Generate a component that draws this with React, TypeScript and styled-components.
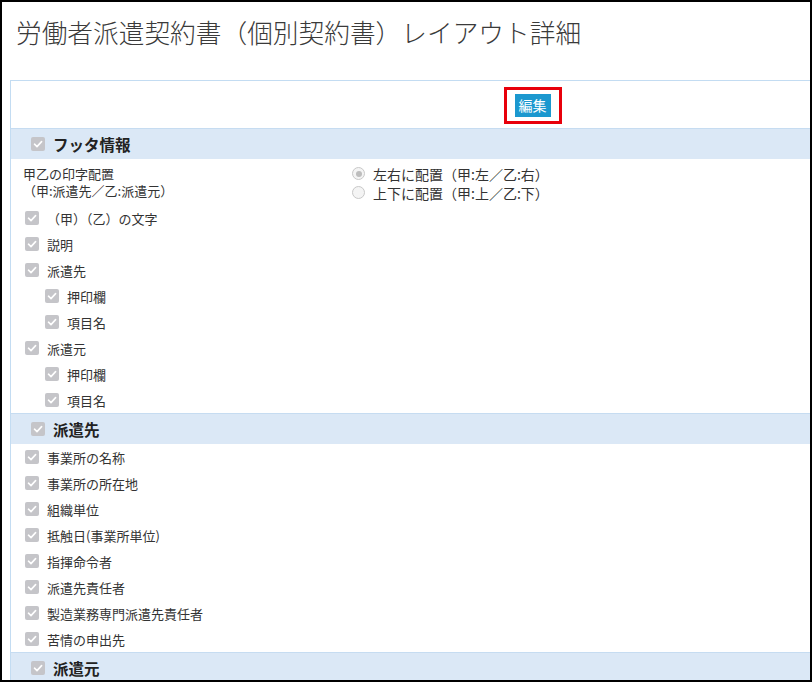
import React from 'react';
import styled, { createGlobalStyle } from 'styled-components';

const GlobalStyle = createGlobalStyle`
  html, body {
    margin: 0;
    padding: 0;
    background: #fff;
  }
  body {
    font-family: "Noto Sans CJK JP", "Noto Sans", sans-serif;
    color: #333;
  }
`;

type Item = { label: string; indent?: boolean };

const footerItems: Item[] = [
  { label: '（甲）（乙）の文字' },
  { label: '説明' },
  { label: '派遣先' },
  { label: '押印欄', indent: true },
  { label: '項目名', indent: true },
  { label: '派遣元' },
  { label: '押印欄', indent: true },
  { label: '項目名', indent: true },
];

const clientItems: Item[] = [
  { label: '事業所の名称' },
  { label: '事業所の所在地' },
  { label: '組織単位' },
  { label: '抵触日(事業所単位)' },
  { label: '指揮命令者' },
  { label: '派遣先責任者' },
  { label: '製造業務専門派遣先責任者' },
  { label: '苦情の申出先' },
];

const CheckMark: React.FC<{ size?: number }> = ({ size = 14 }) => (
  <CheckBox $size={size}>
    <svg width={size} height={size} viewBox="0 0 14 14">
      <path d="M3.5 7.2 L6 9.6 L10.6 4.6" fill="none" stroke="#fff" strokeWidth="1.6" strokeLinecap="round" strokeLinejoin="round" />
    </svg>
  </CheckBox>
);

const App: React.FC = () => {
  return (
    <>
      <GlobalStyle />
      <Frame>
        <Title>労働者派遣契約書（個別契約書）レイアウト詳細</Title>
        <Panel>
          <Toolbar>
            <Highlight>
              <EditButton>編集</EditButton>
            </Highlight>
          </Toolbar>

          <SectionHeader>
            <CheckMark />
            <SectionTitle>フッタ情報</SectionTitle>
          </SectionHeader>
          <SettingRow>
            <SettingLabel>
              甲乙の印字配置
              <br />
              （甲:派遣先／乙:派遣元）
            </SettingLabel>
            <RadioList>
              <RadioItem>
                <Radio $checked />
                左右に配置（甲:左／乙:右）
              </RadioItem>
              <RadioItem>
                <Radio />
                上下に配置（甲:上／乙:下）
              </RadioItem>
            </RadioList>
          </SettingRow>
          {footerItems.map((it, i) => (
            <CheckRow key={'f' + i} $indent={it.indent}>
              <CheckMark />
              <span>{it.label}</span>
            </CheckRow>
          ))}

          <SectionHeader>
            <CheckMark />
            <SectionTitle>派遣先</SectionTitle>
          </SectionHeader>
          {clientItems.map((it, i) => (
            <CheckRow key={'c' + i} $indent={it.indent}>
              <CheckMark />
              <span>{it.label}</span>
            </CheckRow>
          ))}

          <SectionHeader>
            <CheckMark />
            <SectionTitle>派遣元</SectionTitle>
          </SectionHeader>
        </Panel>
      </Frame>
    </>
  );
};

const Frame = styled.div`
  width: 812px;
  height: 682px;
  box-sizing: border-box;
  border: 2px solid #000;
  overflow: hidden;
  background: #fff;
`;

const Title = styled.h1`
  margin: 0;
  padding: 12px 14px 0;
  font-size: 25.7px;
  line-height: 36px;
  font-weight: 300;
  color: #3a3a3a;
  white-space: nowrap;
`;

const Panel = styled.div`
  margin: 30px 0 0 8px;
  width: 1044px;
  box-sizing: border-box;
  border-top: 1px solid #c3dcf2;
  border-left: 1px solid #c3dcf2;
`;

const Toolbar = styled.div`
  height: 47px;
  display: flex;
  align-items: center;
  justify-content: center;
`;

const Highlight = styled.div`
  display: flex;
  align-items: center;
  justify-content: center;
  width: 58px;
  height: 37px;
  box-sizing: border-box;
  border: 3px solid #e8000b;
  margin-top: 1px;
`;

const EditButton = styled.button`
  width: 36px;
  height: 23px;
  padding: 0;
  border: none;
  border-radius: 0;
  background: #1b98cf;
  color: #fff;
  font-family: "Noto Sans CJK JP", sans-serif;
  font-size: 14px;
  line-height: 23px;
  cursor: pointer;
`;

const SectionHeader = styled.div`
  height: 30px;
  border-top: 1px solid #c6dcf1;
  background: #dbe8f6;
  display: flex;
  align-items: center;
  gap: 8px;
  padding-left: 20px;
`;

const SectionTitle = styled.span`
  font-size: 15.5px;
  font-weight: bold;
  color: #222;
`;

const CheckBox = styled.span<{ $size: number }>`
  display: inline-flex;
  width: ${(p) => p.$size}px;
  height: ${(p) => p.$size}px;
  border-radius: 2px;
  background: #c5c5c9;
  flex-shrink: 0;
`;

const CheckRow = styled.div<{ $indent?: boolean }>`
  height: 26px;
  display: flex;
  align-items: center;
  gap: 8px;
  padding-left: ${(p) => (p.$indent ? 34 : 14)}px;
  font-size: 13px;
  color: #333;
`;

const SettingRow = styled.div`
  display: grid;
  grid-template-columns: 329px 1fr;
  height: 46px;
  padding-left: 12px;
  font-size: 13px;
  color: #333;
`;

const SettingLabel = styled.div`
  padding: 6px 0;
  line-height: 17px;
`;

const RadioList = styled.div`
  padding: 5px 0 3px;
  display: flex;
  flex-direction: column;
  font-size: 14px;
`;

const RadioItem = styled.label`
  height: 19px;
  display: flex;
  align-items: center;
  gap: 8px;
`;

const Radio = styled.span<{ $checked?: boolean }>`
  position: relative;
  width: 13px;
  height: 13px;
  box-sizing: border-box;
  border-radius: 50%;
  border: 1px solid #c8c8c8;
  background: #f4f4f4;
  flex-shrink: 0;

  &::after {
    content: '';
    display: ${(p) => (p.$checked ? 'block' : 'none')};
    position: absolute;
    left: 2.5px;
    top: 2.5px;
    width: 6px;
    height: 6px;
    border-radius: 50%;
    background: #bdbdbd;
  }
`;

export default App;
